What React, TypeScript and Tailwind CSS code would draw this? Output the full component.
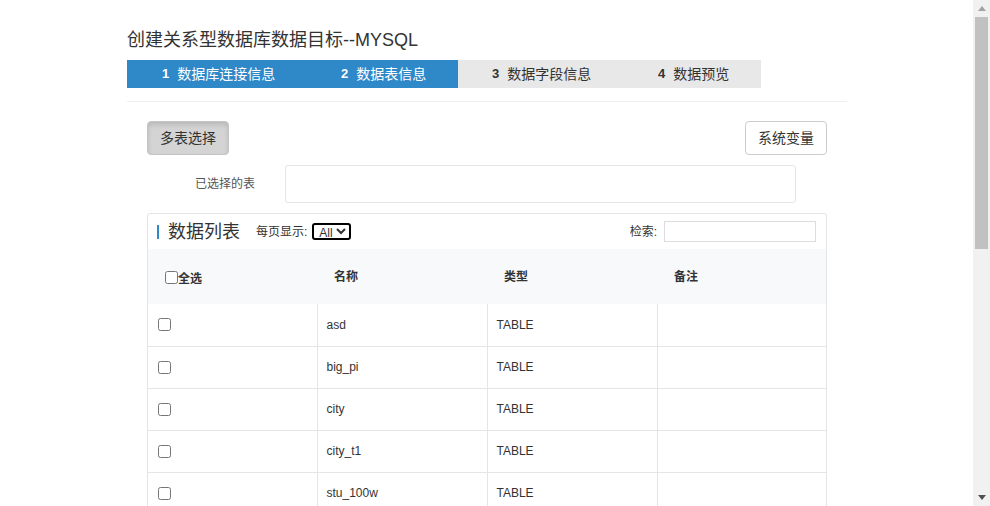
import React from 'react';

const STEPS = [
    { n: 1, label: '数据库连接信息', active: true, w: 'w-[165px]', pl: 'pl-[35px]' },
    { n: 2, label: '数据表信息', active: true, w: 'w-[166px]', pl: 'pl-[49px]' },
    { n: 3, label: '数据字段信息', active: false, w: 'w-[166px]', pl: 'pl-[34px]' },
    { n: 4, label: '数据预览', active: false, w: 'w-[137px]', pl: 'pl-[34px]' },
];

const ROWS = [
    { name: 'asd', type: 'TABLE' },
    { name: 'big_pi', type: 'TABLE' },
    { name: 'city', type: 'TABLE' },
    { name: 'city_t1', type: 'TABLE' },
    { name: 'stu_100w', type: 'TABLE' },
    { name: 'stu_info', type: 'TABLE' },
    { name: 'student', type: 'TABLE' },
    { name: 'test', type: 'TABLE' },
    { name: 'test_t1', type: 'TABLE' },
    { name: 'user', type: 'TABLE' },
    { name: 'user_t1', type: 'TABLE' },
    { name: 'v_city', type: 'VIEW' },
];

const font = { fontFamily: '"Liberation Sans", Arial, "Noto Sans CJK SC", sans-serif' };

// page scrollbar as the browser drew it
const ScrollBar = () => (
    <div className="fixed right-0 top-0 flex h-screen w-[17px] flex-col items-center bg-[#f1f1f1]">
        <div className="flex h-[17px] items-center justify-center">
            <svg width="8" height="5" viewBox="0 0 8 5"><path d="M0 5 L4 0 L8 5 Z" fill="#a3a3a3" /></svg>
        </div>
        <div className="h-[232px] w-[13px] bg-[#c1c1c1]" />
        <div className="flex-1" />
        <div className="flex h-[17px] items-center justify-center">
            <svg width="8" height="5" viewBox="0 0 8 5"><path d="M0 0 L8 0 L4 5 Z" fill="#505050" /></svg>
        </div>
    </div>
);

const App: React.FC = () => {
    return (
        <div className="h-screen overflow-y-scroll bg-white text-[#333]" style={font}>
            <div className="ml-[127px] w-[720px] pt-[29px] pb-[40px]">
                <h2 className="text-[18px] leading-[22px] text-[#333]">创建关系型数据库数据目标--MYSQL</h2>

                {/* wizard steps */}
                <div className="mt-[9px] flex h-[28px]">
                    {STEPS.map((s) => (
                        <div
                            key={s.n}
                            className={`${s.w} ${s.pl} flex items-center ${s.active ? 'bg-[#2f89c9] text-white' : 'bg-[#e8e8e8] text-[#333]'}`}
                        >
                            <span className="text-[13px] font-bold">{s.n}</span>
                            <span className="ml-[8px] text-[14px]">{s.label}</span>
                        </div>
                    ))}
                </div>

                <div className="mt-[13px] border-t border-[#eeeeee]" />

                <div className="px-[20px] pt-[19px]">
                    <div className="flex justify-between">
                        <button className="h-[34px] w-[82px] rounded-[4px] border border-[#c4c4c4] bg-[#d4d4d4] text-[14px] text-[#333] shadow-[inset_0_3px_5px_rgba(0,0,0,0.125)]">
                            多表选择
                        </button>
                        <button className="h-[34px] w-[82px] rounded-[4px] border border-[#cccccc] bg-white text-[14px] text-[#333]">
                            系统变量
                        </button>
                    </div>

                    <div className="mt-[10px] flex items-center">
                        <label className="w-[138px] pr-[30px] text-right text-[12px] text-[#555]">已选择的表</label>
                        <div className="h-[38px] w-[511px] rounded-[3px] border border-[#e6e6e6]" />
                    </div>

                    {/* data list panel */}
                    <div className="mt-[10px] rounded-[3px] border border-[#e5e5e5]">
                        <div className="flex h-[35px] items-center justify-between pl-[9px] pr-[10px]">
                            <div className="flex items-center">
                                <span className="h-[14px] w-[2px] bg-[#2f89c9]" />
                                <span className="ml-[9px] text-[18px] leading-[22px] text-[#333]">数据列表</span>
                                <span className="ml-[16px] text-[12px] text-[#333]">每页显示:</span>
                                <select className="ml-[5px] h-[17px] rounded-[3px] border-2 border-black bg-white pl-[1px] text-[12px] leading-[13px] text-[#333]">
                                    <option>All</option>
                                </select>
                            </div>
                            <div className="flex items-center">
                                <span className="text-[12px] text-[#333]">检索:</span>
                                <input className="ml-[7px] h-[21px] w-[152px] border border-[#dcdce0] outline-none" />
                            </div>
                        </div>

                        <table className="w-full table-fixed border-collapse text-[12px]">
                            <thead>
                                <tr className="h-[55px] bg-[#f8f9fb]">
                                    <th className="w-[169px] pl-[17px] text-left font-bold">
                                        <label className="flex items-center pt-[2px]">
                                            <input type="checkbox" className="m-0 h-[13px] w-[13px]" />
                                            <span className="mt-[3px]">全选</span>
                                        </label>
                                    </th>
                                    <th className="w-[170px] pl-[17px] text-left font-bold">名称</th>
                                    <th className="w-[170px] pl-[17px] text-left font-bold">类型</th>
                                    <th className="pl-[17px] text-left font-bold">备注</th>
                                </tr>
                            </thead>
                            <tbody>
                                {ROWS.map((r) => (
                                    <tr key={r.name} className="h-[42px] border-b border-[#e5e5e5]">
                                        <td className="border-r border-[#e5e5e5] pl-[10px]">
                                            <input type="checkbox" className="m-0 block h-[13px] w-[13px]" />
                                        </td>
                                        <td className="border-r border-[#e5e5e5] pl-[9px]">{r.name}</td>
                                        <td className="border-r border-[#e5e5e5] pl-[9px]">{r.type}</td>
                                        <td className="pl-[9px]" />
                                    </tr>
                                ))}
                            </tbody>
                        </table>
                    </div>
                </div>
            </div>
            <ScrollBar />
        </div>
    );
};

export default App;
